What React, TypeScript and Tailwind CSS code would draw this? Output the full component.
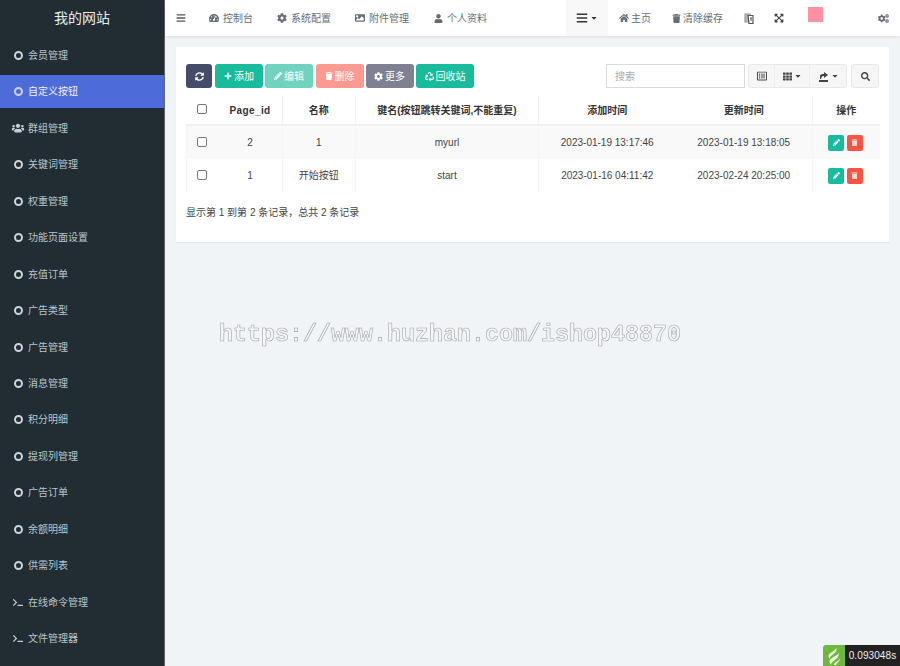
import type { ReactNode } from 'react'
import {
  FaBars,
  FaCaretDown,
  FaCog,
  FaCogs,
  FaExpandArrowsAlt,
  FaHome,
  FaImage,
  FaPencilAlt,
  FaPlus,
  FaRecycle,
  FaRegListAlt,
  FaSearch,
  FaSyncAlt,
  FaTachometerAlt,
  FaTerminal,
  FaTh,
  FaTrash,
  FaUser,
  FaUsers,
} from 'react-icons/fa'

const font = "font-['Liberation_Sans','Noto_Sans_CJK_SC',sans-serif]"

const menu = [
  '会员管理',
  '自定义按钮',
  '群组管理',
  '关键词管理',
  '权重管理',
  '功能页面设置',
  '充值订单',
  '广告类型',
  '广告管理',
  '消息管理',
  '积分明细',
  '提现列管理',
  '广告订单',
  '余额明细',
  '供需列表',
  '在线命令管理',
  '文件管理器',
]

const rows = [
  { id: '2', name: '1', key: 'myurl', added: '2023-01-19 13:17:46', updated: '2023-01-19 13:18:05' },
  { id: '1', name: '开始按钮', key: 'start', added: '2023-01-16 04:11:42', updated: '2023-02-24 20:25:00' },
]

function MenuIcon({ label }: { label: string }) {
  if (label === '群组管理') return <FaUsers className="w-[10px] scale-125 text-[10px] text-[#c5cdd2]" />
  if (label === '在线命令管理' || label === '文件管理器') {
    return <FaTerminal className="w-[10px] text-[9px] text-[#c5cdd2]" />
  }
  return <span className="mx-[0.5px] h-[9px] w-[9px] rounded-full border-2 border-[#ccd5d9]" />
}

function Sidebar() {
  return (
    <aside className="flex h-full w-[165px] shrink-0 flex-col border-r border-[#5a6266] bg-[#222d33]">
      <div className="flex h-[39px] shrink-0 items-center justify-center pb-[3px] text-[14px] text-[#e8eced]">我的网站</div>
      {menu.map((label) => (
        <div
          key={label}
          className={
            label === '自定义按钮'
              ? 'mb-[3.45px] flex h-[33px] shrink-0 items-center gap-[5px] bg-[#4e6cd9] pl-[13px] text-[10px] text-[#eef1fb]'
              : 'mb-[3.45px] flex h-[33px] shrink-0 items-center gap-[5px] pl-[13px] text-[10px] text-[#b8c7ce]'
          }
        >
          <MenuIcon label={label} />
          <span>{label}</span>
        </div>
      ))}
    </aside>
  )
}

function NavItem({ icon, label, className }: { icon: ReactNode; label?: string; className: string }) {
  return (
    <div className={`flex h-full items-center gap-[4px] text-[10px] text-[#666e75] ${className}`}>
      {icon}
      {label && <span>{label}</span>}
    </div>
  )
}

// overlapping pages with a letter on the front one
function TranslateIcon() {
  return (
    <svg width="10" height="11" viewBox="0 0 10 11" fill="none" stroke="#555" strokeWidth="1.2">
      <path d="M1 1h5v8H1z" fill="#bbb" stroke="#999" />
      <path d="M4 2.500h5v8H5z" fill="#fff" />
      <path d="M6 5h2M7 5v3" strokeWidth="1" />
    </svg>
  )
}

function Topbar() {
  return (
    <header className="flex h-[36px] shrink-0 items-center bg-white pl-[11px] pr-[11px] shadow-[0_1px_3px_rgba(0,0,0,0.08)]">
      <FaBars className="mr-[23px] text-[10px] text-[#555]" />
      <NavItem className="mr-[24px]" icon={<FaTachometerAlt className="text-[10px]" />} label="控制台" />
      <NavItem className="mr-[24px]" icon={<FaCog className="text-[10px]" />} label="系统配置" />
      <NavItem className="mr-[25px]" icon={<FaImage className="text-[10px]" />} label="附件管理" />
      <NavItem className="mr-[79px]" icon={<FaUser className="text-[9px]" />} label="个人资料" />
      <div className="mr-[11px] flex h-full w-[42px] items-center justify-center gap-[2px] bg-[#f8f8f8] text-[#333]">
        <FaBars className="text-[12px]" />
        <FaCaretDown className="text-[8px]" />
      </div>
      <NavItem className="mr-[21px] !gap-[2px]" icon={<FaHome className="text-[10px]" />} label="主页" />
      <NavItem className="mr-[21px] !gap-[2px]" icon={<FaTrash className="text-[9px]" />} label="清除缓存" />
      <NavItem className="mr-[20px]" icon={<TranslateIcon />} />
      <NavItem className="mr-[24px]" icon={<FaExpandArrowsAlt className="text-[10px] text-[#444]" />} />
      <div className="mb-[7px] h-[15px] w-[15px] bg-[#ff8fa3]" />
      <NavItem className="ml-auto" icon={<FaCogs className="text-[11px]" />} />
    </header>
  )
}

function ToolButton({ icon, label, className }: { icon: ReactNode; label?: string; className: string }) {
  return (
    <div className={`flex h-[24px] items-center justify-center gap-[2px] rounded-[3px] text-[10px] text-white ${className}`}>
      {icon}
      {label && <span>{label}</span>}
    </div>
  )
}

function Toolbar() {
  return (
    <div className="flex h-[24px] items-center">
      <ToolButton className="mr-[3px] w-[26px] bg-[#444c69]" icon={<FaSyncAlt className="text-[9px]" />} />
      <ToolButton className="mr-[2px] w-[48px] bg-[#18bc9c]" icon={<FaPlus className="text-[8px]" />} label="添加" />
      <ToolButton className="mr-[2.5px] w-[48px] bg-[#6fd3bf]" icon={<FaPencilAlt className="text-[8px]" />} label="编辑" />
      <ToolButton className="mr-[2px] w-[48px] bg-[#fb9a90]" icon={<FaTrash className="text-[8px]" />} label="删除" />
      <ToolButton className="mr-[2.5px] w-[48px] bg-[#7f8091]" icon={<FaCog className="text-[9px]" />} label="更多" />
      <ToolButton className="w-[58px] bg-[#18bc9c]" icon={<FaRecycle className="text-[9px]" />} label="回收站" />

      <div className="ml-auto mr-[3px] flex h-[24px] w-[139px] items-center border border-[#d9dcdd] bg-white pl-[8px] text-[10px] text-[#a5a9ac]">
        搜索
      </div>
      <div className="mr-[4px] flex h-[24px] overflow-hidden rounded-[3px] border border-[#e8e8e8] bg-[#f6f6f6] text-[#444]">
        <div className="flex w-[26px] items-center justify-center border-r border-[#ececec]">
          <FaRegListAlt className="text-[10px]" />
        </div>
        <div className="flex w-[35px] items-center justify-center gap-[2px] border-r border-[#ececec]">
          <FaTh className="text-[9px]" />
          <FaCaretDown className="text-[8px]" />
        </div>
        <div className="flex w-[36px] items-center justify-center gap-[2px]">
          <svg width="11" height="11" viewBox="0 0 11 11" fill="currentColor">
            <path d="M1 9h9v2H1zM2 8V5.500C2 3.500 3.500 3 6 3V1l4 3-4 3V5C4.500 5 3.500 5.500 3 8z" />
          </svg>
          <FaCaretDown className="text-[8px]" />
        </div>
      </div>
      <div className="flex h-[24px] w-[28px] items-center justify-center rounded-[3px] border border-[#e8e8e8] bg-[#f6f6f6] text-[#444]">
        <FaSearch className="text-[9px]" />
      </div>
    </div>
  )
}

function Checkbox() {
  return <span className="mb-[2px] ml-[10px] block h-[10px] w-[10px] rounded-[2px] border border-[#767676] bg-white" />
}

function DataTable() {
  return (
    <table className="mt-[8px] w-full table-fixed border-collapse text-center text-[10px] text-[#444]">
      <colgroup>
        <col className="w-[32px]" />
        <col className="w-[63.500px]" />
        <col className="w-[73.500px]" />
        <col className="w-[183px]" />
        <col className="w-[137px]" />
        <col className="w-[137px]" />
        <col className="w-[67px]" />
      </colgroup>
      <thead>
        <tr className="h-[29px] border-b-2 border-[#f0f0f0] font-bold text-[#333]">
          <th>
            <Checkbox />
          </th>
          <th className="border-r border-[#f2f2f2] tracking-[0.4px]">Page_id</th>
          <th className="border-r border-[#f2f2f2]">名称</th>
          <th className="border-r border-[#f2f2f2]">键名(按钮跳转关键词,不能重复)</th>
          <th>添加时间</th>
          <th className="border-r border-[#f2f2f2]">更新时间</th>
          <th>操作</th>
        </tr>
      </thead>
      <tbody>
        {rows.map((row, i) => (
          <tr key={row.id} className={i === 0 ? 'h-[34px] bg-[#f9f9f9]' : 'h-[33px] bg-white'}>
            <td className="border-l border-[#f5f5f5]">
              <Checkbox />
            </td>
            <td className="border-r border-[#f5f5f5]">{row.id}</td>
            <td className="border-r border-[#f5f5f5]">{row.name}</td>
            <td className="border-r border-[#f5f5f5]">{row.key}</td>
            <td>{row.added}</td>
            <td className="border-r border-[#f5f5f5]">{row.updated}</td>
            <td>
              <div className="flex items-center justify-center gap-[2.5px] pr-[2px]">
                <span className="flex h-[16px] w-[16px] items-center justify-center rounded-[2px] bg-[#18bc9c] text-white">
                  <FaPencilAlt className="text-[7px]" />
                </span>
                <span className="flex h-[16px] w-[16px] items-center justify-center rounded-[2px] bg-[#f75444] text-[#ffd9d5]">
                  <FaTrash className="text-[7px]" />
                </span>
              </div>
            </td>
          </tr>
        ))}
      </tbody>
    </table>
  )
}

export default function App() {
  return (
    <div className={`relative flex h-screen w-full overflow-hidden bg-[#f1f4f6] ${font}`}>
      <Sidebar />
      <div className="flex min-w-0 flex-1 flex-col">
        <Topbar />
        <main className="px-[11px] pt-[11px]">
          <section className="h-[195px] bg-white px-[10px] pt-[17px] shadow-[0_1px_1px_rgba(0,0,0,0.05)]">
            <Toolbar />
            <DataTable />
            <p className="mt-[13px] text-[10px] text-[#444]">显示第 1 到第 2 条记录，总共 2 条记录</p>
          </section>
        </main>
      </div>

      {/* watermark over the page */}
      <div className="absolute left-[219px] top-[320px] font-['Liberation_Mono',monospace] text-[23.330px] font-bold leading-[30px] whitespace-nowrap text-[#f4f5f7] [will-change:transform] [-webkit-text-stroke:0.6px_#a4a6a9]">
        https://www.huzhan.com/ishop48870
      </div>

      {/* timer badge */}
      <div className="absolute bottom-0 right-0 flex h-[21px] items-stretch">
        <div className="flex w-[22px] items-center justify-center rounded-tl-[3px] bg-[#6fb83f]">
          <svg width="18" height="20" viewBox="0 0 16 18" fill="#e9f5df">
            <path d="M10 1c1 3-7 5-7 8 0 1 .5 2 1 2.500C4 8 12 7 10 1zM12 6c0 3-8 4-8 8 0 1 .5 2 1.500 3C5 13 14 12 12 6zM13 11c0 3-5 3-5 6h2c0-2 4-3 3-6z" />
          </svg>
        </div>
        <div className="flex w-[55px] items-center justify-center bg-[#222] text-[10px] tracking-[0.1px] text-[#eee]">
          0.093048s
        </div>
      </div>
    </div>
  )
}
